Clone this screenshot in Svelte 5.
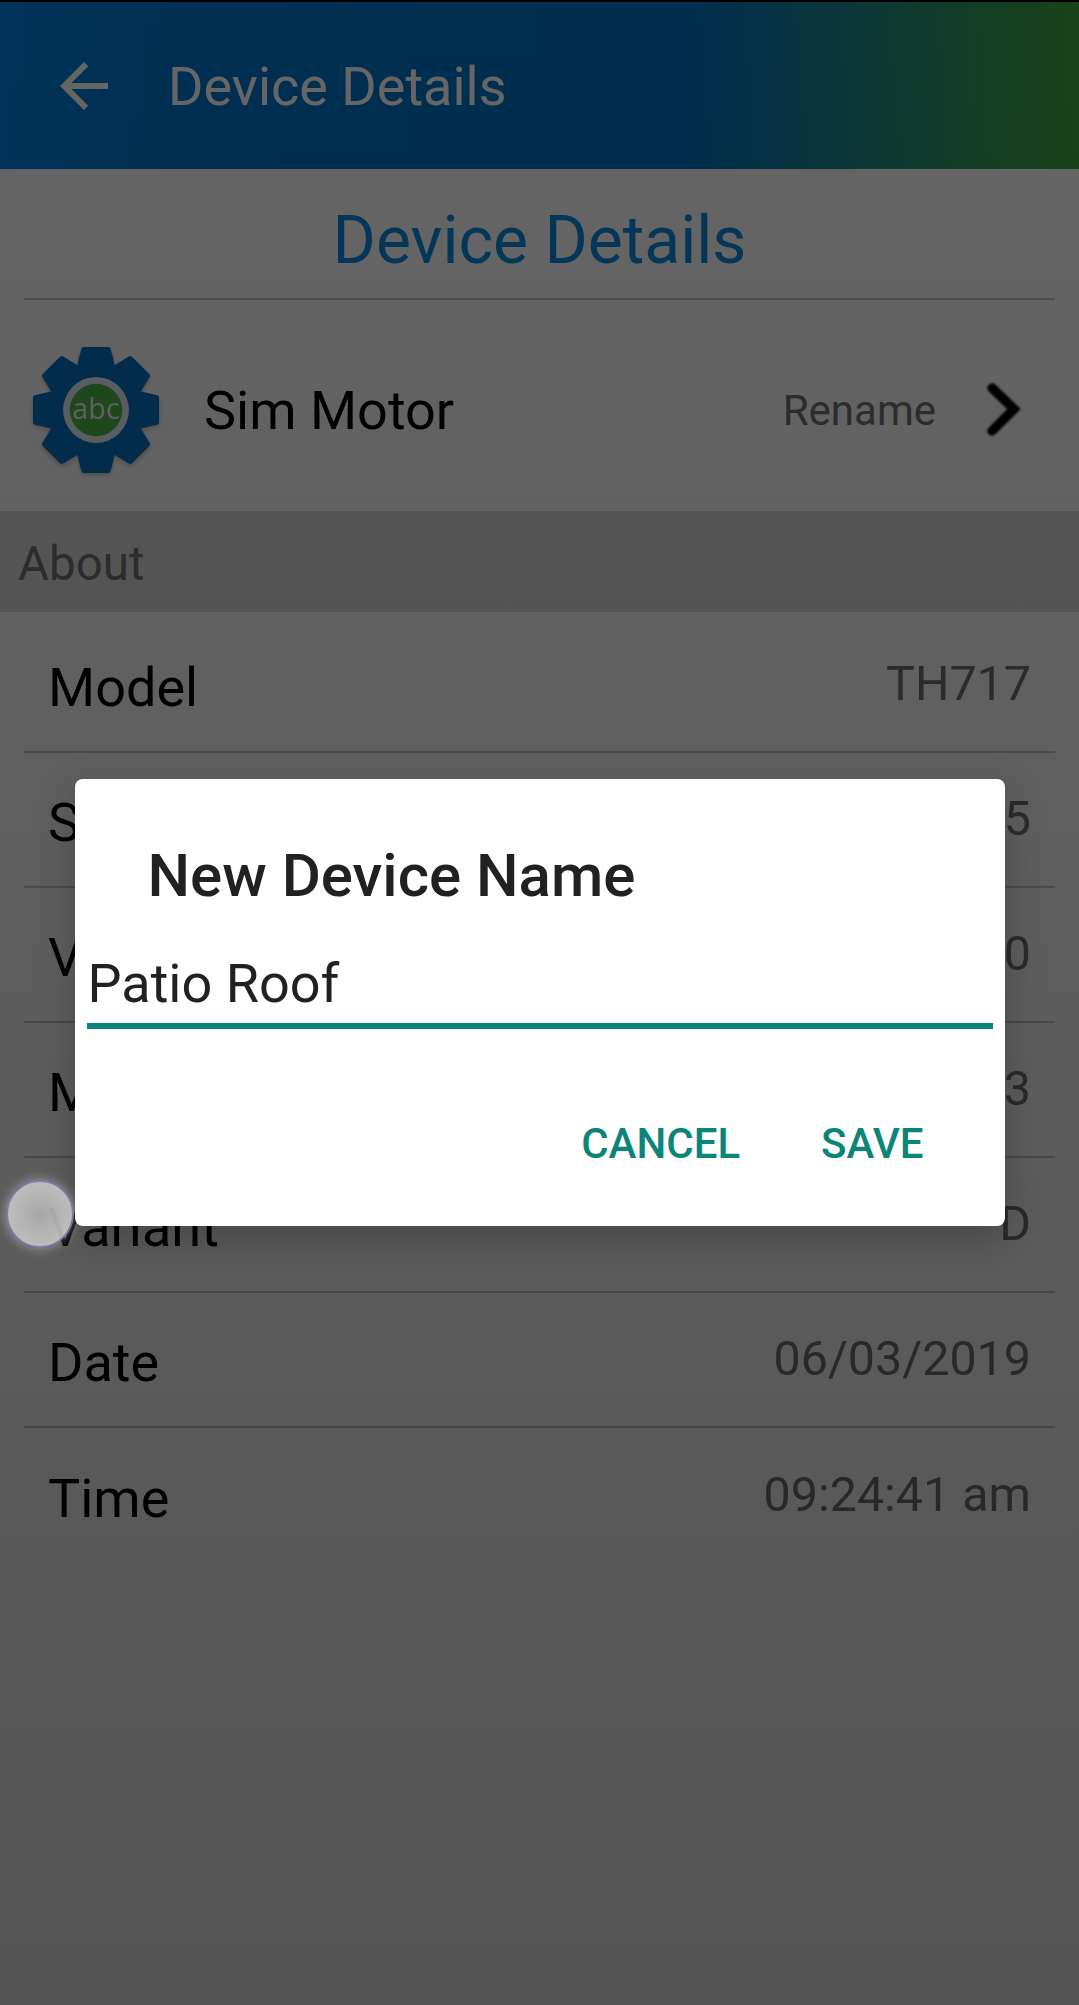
<script>
  const rows = [
    { label: 'Model', value: 'TH717' },
    { label: 'Serial', value: '5' },
    { label: 'Version', value: '0' },
    { label: 'Memory', value: '3' },
    { label: 'Variant', value: 'D' },
    { label: 'Date', value: '06/03/2019' },
    { label: 'Time', value: '09:24:41 am' }
  ];

  // 8 flat teeth around the hub, centred on cx,cy
  function gearPath(cx, cy) {
    const pts = [];
    for (let i = 0; i < 8; i++) {
      const a = (i * Math.PI) / 4 - Math.PI / 2;
      for (const [r, off] of [[45, -0.36], [60, -0.2], [60, 0.2], [45, 0.36]]) {
        pts.push(`${(cx + r * Math.cos(a + off)).toFixed(1)} ${(cy + r * Math.sin(a + off)).toFixed(1)}`);
      }
    }
    return 'M' + pts.join('L') + 'Z';
  }
</script>

<div class="page">
  <header class="topbar">
    <svg class="back" viewBox="0 0 24 24"><path d="M20 11H7.83l5.59-5.59L12 4l-8 8 8 8 1.41-1.41L7.83 13H20z" /></svg>
    <span class="topbar-title">Device Details</span>
  </header>

  <h1 class="title">Device Details</h1>

  <div class="device">
    <svg class="gear" viewBox="0 0 140 140">
      <path d={gearPath(70, 70)} class="gear-body" />
      <circle cx="70" cy="70" r="32" fill="#fff" opacity="0.9" />
      <circle cx="70" cy="70" r="25.5" fill="#4db848" />
      <text x="70" y="79" text-anchor="middle" class="gear-text">abc</text>
    </svg>
    <span class="device-name">Sim Motor</span>
    <span class="rename">Rename</span>
    <svg class="chevron" viewBox="0 0 40 60"><path d="M8 8 L30 29 L8 51" /></svg>
  </div>

  <div class="section">About</div>

  <div class="rows">
    {#each rows as row}
      <div class="row">
        <span class="label">{row.label}</span>
        <span class="value">{row.value}</span>
      </div>
    {/each}
  </div>
</div>

<div class="scrim">
  <div class="dialog">
    <h2>New Device Name</h2>
    <div class="field">Patio Roof</div>
    <div class="actions">
      <button>CANCEL</button>
      <button>SAVE</button>
    </div>
  </div>
</div>

<div class="touch"></div>

<style>
  :global(body) {
    margin: 0;
    background: #fff;
  }

  .page {
    width: 1079px;
    height: 2005px;
    overflow: hidden;
    font-family: Roboto, "Liberation Sans", sans-serif;
    color: #000;
  }

  .topbar {
    height: 167px;
    border-top: 2px solid #000;
    display: flex;
    align-items: center;
    background: linear-gradient(90deg, #0080e0 0%, #0076cc 16%, #0072c4 64%, #3fa83a 100%);
  }

  .back {
    width: 72px;
    height: 72px;
    margin-left: 48px;
    fill: #fff;
  }

  .topbar-title {
    margin-left: 48px;
    margin-top: 2px;
    font-size: 54px;
    color: #fff;
  }

  .title {
    margin: 0 24px;
    height: 131px;
    padding-top: 13px;
    box-sizing: border-box;
    border-bottom: 2px solid #c8c8c8;
    display: flex;
    align-items: center;
    justify-content: center;
    font-size: 66px;
    font-weight: 400;
    color: #0b8ae0;
  }

  .device {
    height: 211px;
    padding-top: 9px;
    box-sizing: border-box;
    display: flex;
    align-items: center;
  }

  .gear {
    width: 144px;
    height: 144px;
    margin-left: 24px;
    filter: drop-shadow(0 2px 2px rgba(0, 0, 0, 0.25));
  }

  .gear-body {
    fill: #0672c4;
    stroke: #0672c4;
    stroke-width: 5;
    stroke-linejoin: round;
  }

  .gear-text {
    font-size: 28px;
    fill: #f0f8f0;
    font-family: "Open Sans", sans-serif;
  }

  .device-name {
    margin-left: 36px;
    font-size: 54px;
  }

  .rename {
    margin-left: auto;
    font-size: 42px;
    color: #737373;
  }

  .chevron {
    width: 40px;
    height: 60px;
    margin: 0 55px 0 48px;
    fill: none;
    stroke: #000;
    stroke-width: 9.5;
    stroke-linecap: round;
    filter: blur(1px);
  }

  .section {
    height: 101px;
    padding: 5px 0 0 18px;
    box-sizing: border-box;
    display: flex;
    align-items: center;
    background: #dcdcdc;
    font-size: 47.5px;
    color: #737373;
  }

  .rows {
    margin: 6px 24px 0;
  }

  .row {
    height: 135px;
    box-sizing: border-box;
    padding: 6px 24px 0;
    border-bottom: 2px solid #c8c8c8;
    display: flex;
    justify-content: space-between;
    align-items: center;
  }

  .row:nth-child(n + 7) {
    border-bottom: none;
  }

  .label {
    font-size: 54px;
  }

  .value {
    margin-top: -8px;
    font-size: 48.4px;
    color: #737373;
  }

  .scrim {
    position: absolute;
    inset: 0;
    height: 2005px;
    display: flex;
    align-items: center;
    justify-content: center;
    background: linear-gradient(180deg, rgba(0, 0, 0, 0.6) 0%, rgba(0, 0, 0, 0.67) 100%);
    font-family: Roboto, "Liberation Sans", sans-serif;
  }

  .dialog {
    width: 930px;
    height: 447px;
    box-sizing: border-box;
    padding-top: 61px;
    display: flex;
    flex-direction: column;
    background: #fff;
    border-radius: 8px;
    box-shadow: 0 14px 40px rgba(0, 0, 0, 0.22);
  }

  h2 {
    margin: 0 0 0 73px;
    font-size: 60px;
    line-height: 72px;
    font-weight: 500;
    color: #212121;
  }

  .field {
    margin: 39px 12px 0;
    padding: 0 1px 6px;
    border-bottom: 6px solid #0b8577;
    font-size: 54px;
    line-height: 66px;
    color: #212121;
  }

  .actions {
    margin: 90px 81px 0 0;
    display: flex;
    justify-content: flex-end;
    gap: 81px;
  }

  button {
    padding: 0;
    border: 0;
    background: none;
    font: 500 42px/50px Roboto, "Liberation Sans", sans-serif;
    color: #0b8577;
  }

  .touch {
    position: absolute;
    left: 6px;
    top: 1180px;
    width: 64px;
    height: 64px;
    border-radius: 50%;
    border: 2px solid #7f84ac;
    background: radial-gradient(circle, #b0b0b0 0%, #c8c8c8 70%, #d4d4d4 100%);
    opacity: 0.9;
    box-shadow: 0 0 12px rgba(255, 255, 255, 0.45);
  }
</style>
